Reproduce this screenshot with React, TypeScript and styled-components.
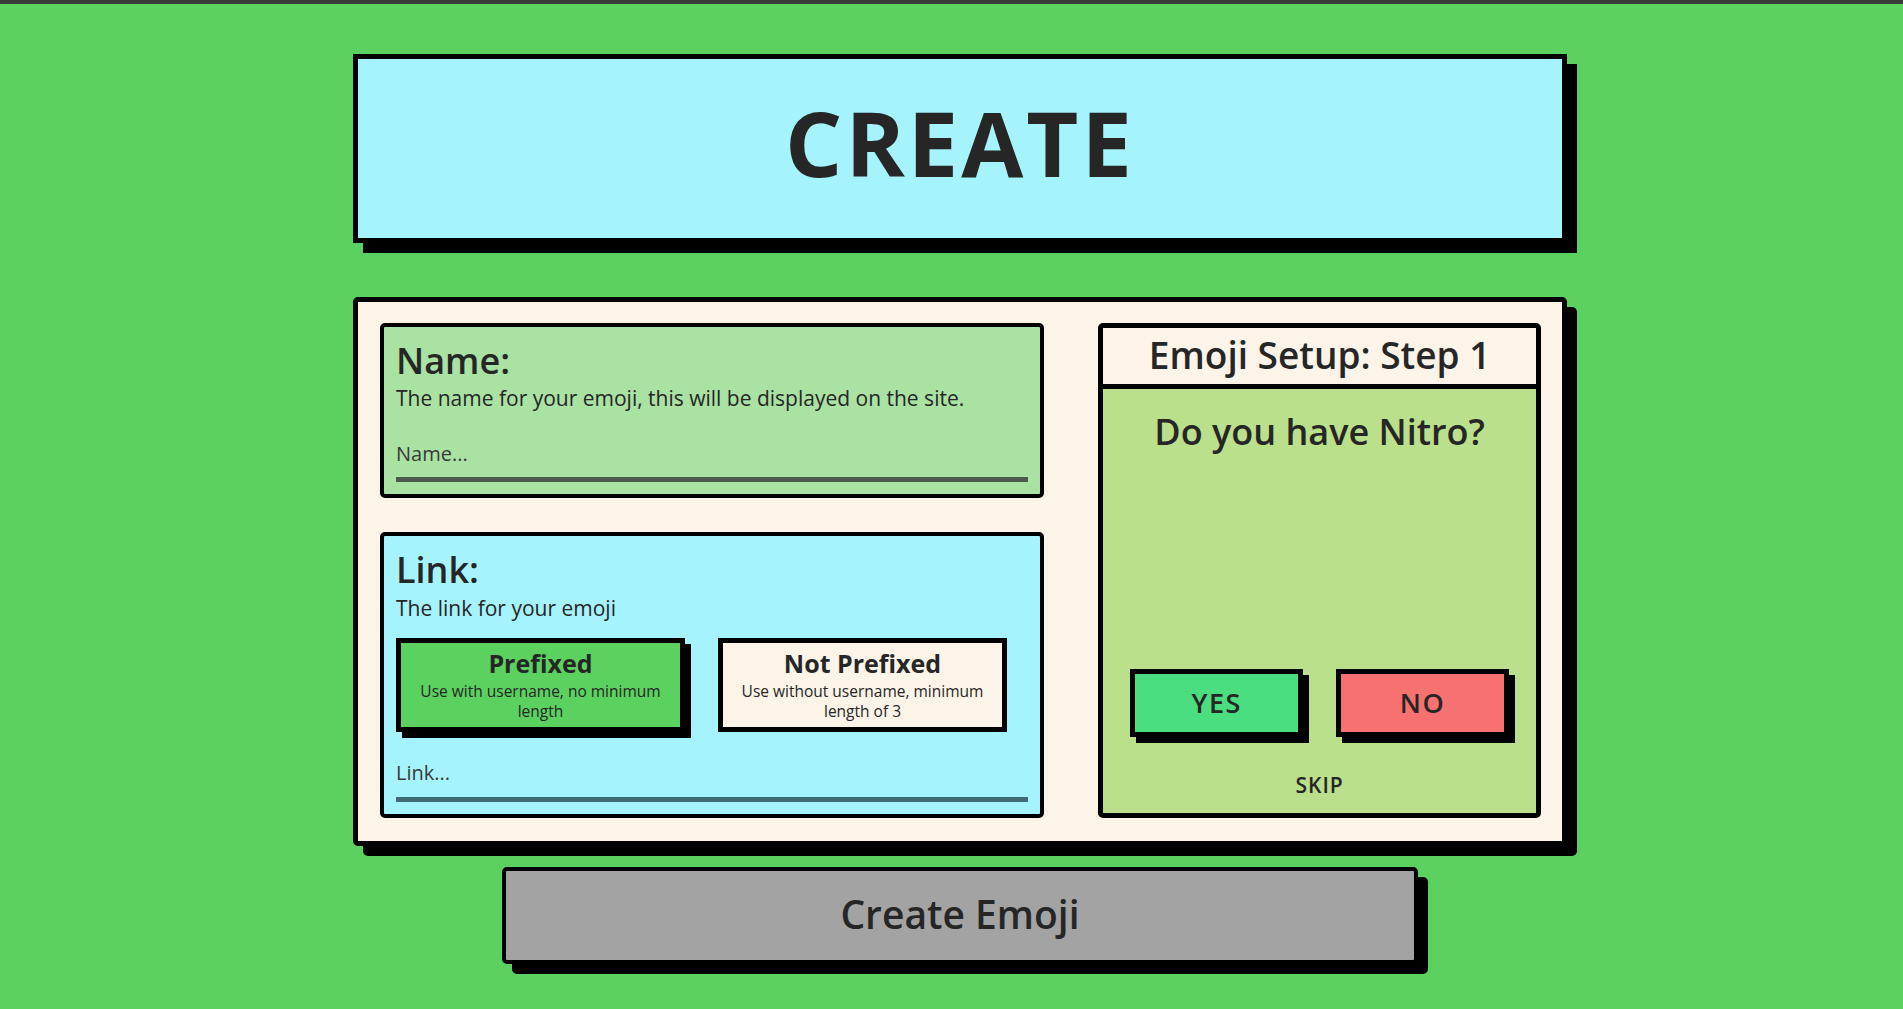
import React, { useState } from 'react';
import styled, { createGlobalStyle } from 'styled-components';

const GlobalStyle = createGlobalStyle`
  html, body {
    margin: 0;
    padding: 0;
  }
  body {
    background: #5bd160;
    font-family: 'Open Sans', 'Noto Sans', sans-serif;
    color: #262626;
    min-height: 100vh;
  }
  *, *::before, *::after {
    box-sizing: border-box;
  }
`;

const TopBar = styled.div`
  height: 4px;
  background: #3a3d3a;
`;

const Page = styled.main`
  display: flex;
  flex-direction: column;
  align-items: center;
  padding: 50px 0 40px 17px;
`;

const TitleBox = styled.header`
  width: 1214px;
  background: #a5f3fc;
  border: 5px solid #000;
  box-shadow: 10px 10px 0 #000;
  padding: 29px 0 42px;
  text-align: center;
`;

const Title = styled.h1`
  margin: 0;
  font-size: 90px;
  line-height: 108px;
  font-weight: 700;
  letter-spacing: 3px;
`;

const Panel = styled.section`
  margin-top: 54px;
  width: 1214px;
  background: #fcf4e8;
  border: 5px solid #000;
  border-radius: 5px;
  box-shadow: 10px 10px 0 #000;
  padding: 21px 21px 23px 22px;
  display: grid;
  grid-template-columns: 3fr 2fr;
  column-gap: 54px;
`;

const LeftColumn = styled.div`
  display: flex;
  flex-direction: column;
  gap: 34px;
`;

const FieldCard = styled.div<{ $bg: string }>`
  background: ${(p) => p.$bg};
  border: 4px solid #000;
  border-radius: 5px;
  padding: 12px 12px 12px;
`;

const FieldTitle = styled.h2`
  margin: 0;
  font-size: 36px;
  line-height: 1.2;
  font-weight: 600;
`;

const FieldHint = styled.p`
  margin: 4px 0 0;
  font-size: 21px;
  line-height: 1.2;
`;

const TextInput = styled.input<{ $line: string; $gap: number }>`
  display: block;
  width: 100%;
  height: 41px;
  margin-top: ${(p) => p.$gap}px;
  padding: 0 0 12px;
  border: none;
  border-bottom: 5px solid ${(p) => p.$line};
  background: transparent;
  font-family: inherit;
  font-size: 20px;
  line-height: 24px;
  color: #262626;
  outline: none;
  &::placeholder {
    color: #3a3a3a;
    opacity: 1;
  }
`;

const ChoiceRow = styled.div`
  display: flex;
  gap: 33px;
  margin-top: 17px;
`;

const Choice = styled.button<{ $active: boolean }>`
  width: 289px;
  border: 5px solid #000;
  border-radius: 0;
  background: ${(p) => (p.$active ? '#5bd160' : '#fcf4e8')};
  box-shadow: ${(p) => (p.$active ? '6px 6px 0 #000' : 'none')};
  padding: 5px 10px 6px;
  text-align: center;
  font-family: inherit;
  color: #262626;
  cursor: pointer;
`;

const ChoiceTitle = styled.span`
  display: block;
  font-size: 25px;
  line-height: 30px;
  font-weight: 700;
`;

const ChoiceDesc = styled.span`
  display: block;
  margin-top: 3px;
  font-size: 15.5px;
  line-height: 20px;
  font-weight: 400;
`;

const SetupCard = styled.div`
  display: flex;
  flex-direction: column;
  border: 5px solid #000;
  border-radius: 5px;
  overflow: hidden;
`;

const SetupHeader = styled.h2`
  margin: 0;
  background: #fcf4e8;
  border-bottom: 5px solid #000;
  padding: 2px 0 4px;
  text-align: center;
  font-size: 37px;
  line-height: 50px;
  font-weight: 600;
`;

const SetupBody = styled.div`
  flex: 1;
  display: flex;
  flex-direction: column;
  background: #bbe08b;
  padding: 21px 27px 15px;
`;

const Question = styled.p`
  margin: 0;
  text-align: center;
  font-size: 36px;
  line-height: 1.2;
  font-weight: 600;
`;

const AnswerRow = styled.div`
  margin-top: auto;
  display: flex;
  justify-content: space-between;
`;

const AnswerButton = styled.button<{ $bg: string }>`
  width: 173px;
  height: 68px;
  border: 5px solid #000;
  border-radius: 0;
  background: ${(p) => p.$bg};
  box-shadow: 6px 6px 0 #000;
  font-family: inherit;
  font-size: 27px;
  font-weight: 600;
  letter-spacing: 1.5px;
  color: #262626;
  cursor: pointer;
`;

const SkipButton = styled.button`
  margin-top: 36px;
  align-self: center;
  background: none;
  border: none;
  padding: 0;
  font-family: inherit;
  font-size: 21px;
  line-height: 1.2;
  font-weight: 600;
  letter-spacing: 1px;
  color: #262626;
  cursor: pointer;
`;

const CreateButton = styled.button`
  margin-top: 21px;
  width: 916px;
  background: #a3a3a3;
  border: 4px solid #000;
  border-radius: 5px;
  box-shadow: 10px 10px 0 #000;
  padding: 19px 0 22px;
  font-family: inherit;
  font-size: 39px;
  line-height: 48px;
  font-weight: 600;
  color: #262626;
  cursor: pointer;
`;

export default function App() {
  const [prefixed, setPrefixed] = useState(true);
  return (
    <>
      <GlobalStyle />
      <TopBar />
      <Page>
        <TitleBox>
          <Title>CREATE</Title>
        </TitleBox>
        <Panel>
          <LeftColumn>
            <FieldCard $bg="#a9e2a2">
              <FieldTitle>Name:</FieldTitle>
              <FieldHint>The name for your emoji, this will be displayed on the site.</FieldHint>
              <TextInput $line="#4b5c4b" $gap={30} placeholder="Name..." />
            </FieldCard>
            <FieldCard $bg="#a5f3fc">
              <FieldTitle>Link:</FieldTitle>
              <FieldHint>The link for your emoji</FieldHint>
              <ChoiceRow>
                <Choice $active={prefixed} onClick={() => setPrefixed(true)}>
                  <ChoiceTitle>Prefixed</ChoiceTitle>
                  <ChoiceDesc>Use with username, no minimum length</ChoiceDesc>
                </Choice>
                <Choice $active={!prefixed} onClick={() => setPrefixed(false)}>
                  <ChoiceTitle>Not Prefixed</ChoiceTitle>
                  <ChoiceDesc>Use without username, minimum length of 3</ChoiceDesc>
                </Choice>
              </ChoiceRow>
              <TextInput $line="#3d6a75" $gap={29} placeholder="Link..." />
            </FieldCard>
          </LeftColumn>
          <SetupCard>
            <SetupHeader>Emoji Setup: Step 1</SetupHeader>
            <SetupBody>
              <Question>Do you have Nitro?</Question>
              <AnswerRow>
                <AnswerButton $bg="#4ade80">YES</AnswerButton>
                <AnswerButton $bg="#f87171">NO</AnswerButton>
              </AnswerRow>
              <SkipButton>SKIP</SkipButton>
            </SetupBody>
          </SetupCard>
        </Panel>
        <CreateButton>Create Emoji</CreateButton>
      </Page>
    </>
  );
}
